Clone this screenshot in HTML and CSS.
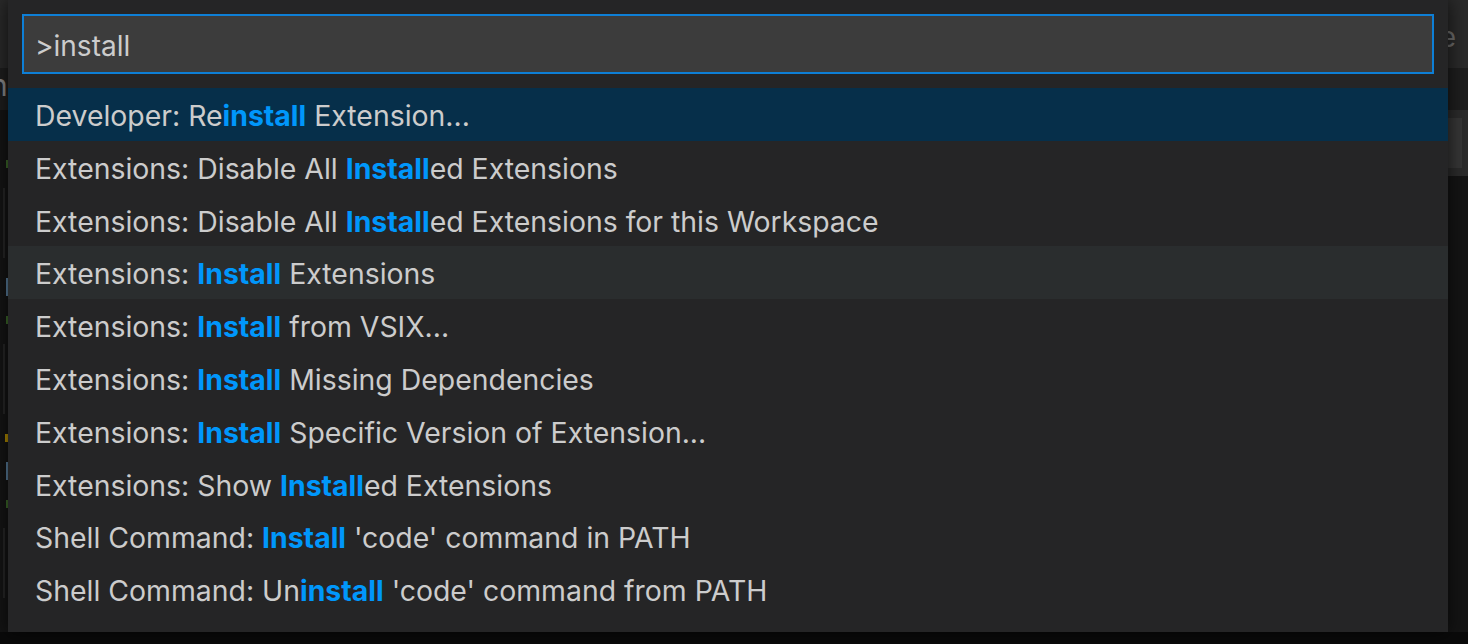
FILE: index.html
```html
<!DOCTYPE html>
<html lang="en">
<head>
    <meta charset="UTF-8">
    <title>Command Palette</title>
    <link rel="stylesheet" href="styles.css">
</head>
<body>
    <div class="workbench">
        <div class="title-bar">
            <span class="tab-letter right">e</span>
        </div>
        <div class="tab-bar">
            <span class="tab-letter left">n</span>
        </div>
        <div class="editor">
            <div class="gutter">
                <span class="mark green"></span>
                <span class="guide"></span>
                <span class="mark blue"></span>
                <span class="mark green"></span>
                <span class="guide"></span>
                <span class="mark yellow"></span>
                <span class="mark blue"></span>
                <span class="mark green"></span>
                <span class="guide"></span>
            </div>
            <div class="minimap">
                <span class="slider"></span>
            </div>
        </div>
    </div>

    <div class="quick-input">
        <div class="input-box">&gt;install</div>
        <ul class="quick-list">
            <li class="quick-item selected">Developer: Re<b>install</b> Extension...</li>
            <li class="quick-item">Extensions: Disable All <b>Install</b>ed Extensions</li>
            <li class="quick-item">Extensions: Disable All <b>Install</b>ed Extensions for this Workspace</li>
            <li class="quick-item hovered">Extensions: <b>Install</b> Extensions</li>
            <li class="quick-item">Extensions: <b>Install</b> from VSIX...</li>
            <li class="quick-item">Extensions: <b>Install</b> Missing Dependencies</li>
            <li class="quick-item">Extensions: <b>Install</b> Specific Version of Extension...</li>
            <li class="quick-item">Extensions: Show <b>Install</b>ed Extensions</li>
            <li class="quick-item">Shell Command: <b>Install</b> 'code' command in PATH</li>
            <li class="quick-item">Shell Command: Un<b>install</b> 'code' command from PATH</li>
        </ul>
    </div>
</body>
</html>
```

FILE: styles.css
```css
* {
    margin: 0;
    padding: 0;
    box-sizing: border-box;
}

body {
    width: 1468px;
    height: 644px;
    overflow: hidden;
    background: #0a0a0a;
    font-family: 'Inter', 'Liberation Sans', sans-serif;
    position: relative;
}

/* editor behind the palette */
.workbench {
    display: flex;
    flex-direction: column;
    height: 632px;
}

.title-bar {
    height: 68px;
    background: #2a2a2a;
    display: flex;
    justify-content: flex-end;
    align-items: center;
    overflow: hidden;
    font-size: 28px;
    color: #6e6e6e;
}

.tab-bar {
    height: 42px;
    background: #1e1e1e;
    display: flex;
    align-items: center;
    color: #8a8a8a;
    font-size: 30px;
    overflow: hidden;
}

.tab-letter.left {
    margin-left: -10px;
    margin-top: -8px;
}

.tab-letter.right {
    margin-right: 12px;
    margin-top: 6px;
}

.editor {
    flex: 1;
    background: #141414;
    display: flex;
    justify-content: space-between;
}

.gutter {
    width: 8px;
    display: flex;
    flex-direction: column;
    align-items: flex-end;
    gap: 20px;
    padding-top: 50px;
}

.mark {
    width: 2px;
    height: 8px;
}

.mark.green { background: #3d6b2a; }
.mark.blue { background: #5a7f9e; height: 18px; }
.mark.yellow { background: #b08a00; width: 3px; }

.guide {
    width: 2px;
    height: 70px;
    background: #262626;
    margin-right: 3px;
}

.minimap {
    width: 20px;
    height: 66px;
    background: #2b2b2b;
    padding: 8px 6px 8px 0;
}

.slider {
    display: block;
    height: 100%;
    background: #363636;
}

/* quick open widget */
.quick-input {
    position: absolute;
    left: 8px;
    top: 0;
    width: 1440px;
    height: 632px;
    background: #252526;
    box-shadow: 0 0 18px rgba(0, 0, 0, 0.7);
    padding-top: 14px;
}

.input-box {
    margin: 0 14px;
    height: 60px;
    background: #3c3c3c;
    border: 2px solid #0e7fd6;
    color: #cccccc;
    font-size: 28px;
    line-height: 56px;
    padding: 2px 0 0 11px;
}

.quick-list {
    list-style: none;
    margin-top: 14px;
}

.quick-item {
    height: 52.8px;
    line-height: 52.8px;
    padding: 2px 0 0 27px;
    color: #cccccc;
    font-size: 28.4px;
    white-space: nowrap;
}

.quick-item b {
    color: #0097fb;
    font-weight: 700;
}

.quick-item.selected {
    background: #062f4a;
}

.quick-item.hovered {
    background: #2a2d2e;
}
```
